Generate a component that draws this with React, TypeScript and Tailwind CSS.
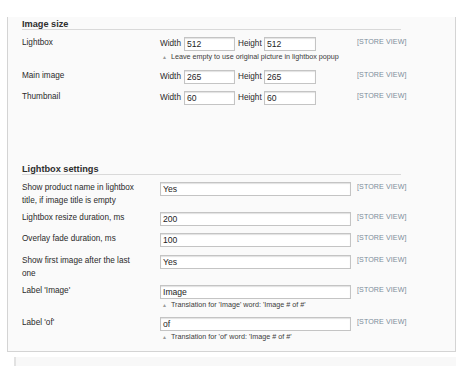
import React from "react";

const font = { fontFamily: '"Liberation Sans", Arial, sans-serif' };

function Input({ value, w }: { value: string; w: string }) {
  return (
    <div
      className={`${w} shrink-0 h-[14px] border border-[#c4c4c4] bg-white shadow-[inset_0_1px_1px_rgba(0,0,0,0.12)] pl-[2px] text-[8.6px] leading-[12px] text-[#1e1e1e]`}
    >
      {value}
    </div>
  );
}

function StoreView() {
  return (
    <div className="shrink-0 w-[90px] text-[7.1px] leading-[11px] text-[#7d8d9a] tracking-[0.1px]">
      [STORE VIEW]
    </div>
  );
}

function Note({ children }: { children: React.ReactNode }) {
  return (
    <div className="mt-[1px] flex items-center whitespace-nowrap text-[7.2px] leading-[10px] text-[#3a3a3a] pl-[2px]">
      <span className="text-[5px] text-[#9a9a9a] mr-[4px]">▲</span>
      <span>{children}</span>
    </div>
  );
}

function Row({
  label,
  children,
  mt,
}: {
  label: React.ReactNode;
  children: React.ReactNode;
  mt: string;
}) {
  return (
    <div className={`flex items-start ${mt}`}>
      <div className="shrink-0 w-[138px] -mt-px pr-[6px] text-[8.2px] leading-[13px] text-[#2a2a2a]">
        {label}
      </div>
      <div className="shrink-0 w-[197px]">{children}</div>
      <StoreView />
    </div>
  );
}

function SizeInputs({ w, h }: { w: string; h: string }) {
  return (
    <div className="flex items-center text-[8.2px] text-[#2a2a2a]">
      <span className="shrink-0 w-[24px]">Width</span>
      <Input value={w} w="w-[51px]" />
      <span className="shrink-0 ml-[3px] w-[26px]">Height</span>
      <Input value={h} w="w-[52px]" />
    </div>
  );
}

function Heading({ children, mt }: { children: React.ReactNode; mt: string }) {
  return (
    <div
      className={`${mt} w-[379px] h-[13px] border-b border-[#d9d9d9] text-[9.2px] font-bold leading-[14px] text-[#2e2e2e]`}
    >
      {children}
    </div>
  );
}

export default function App() {
  return (
    <div className="w-[460px] h-[366px] overflow-hidden bg-white" style={font}>
      <div className="ml-[7px] w-[449px] border-x border-b border-[#d4d4d4] bg-[#fafafa] pl-[14px] pb-[9px]">
        <Heading mt="mt-[17px]">Image size</Heading>

        <Row label="Lightbox" mt="mt-[7px]">
          <SizeInputs w="512" h="512" />
          <Note>Leave empty to use original picture in lightbox popup</Note>
        </Row>
        <Row label="Main image" mt="mt-[8px]">
          <SizeInputs w="265" h="265" />
        </Row>
        <Row label="Thumbnail" mt="mt-[7px]">
          <SizeInputs w="60" h="60" />
        </Row>

        <Heading mt="mt-[57px]">Lightbox settings</Heading>

        <Row
          label={
            <>
              Show product name in lightbox
              <br />
              title, if image title is empty
            </>
          }
          mt="mt-[7px]"
        >
          <Input value="Yes" w="w-[191px]" />
        </Row>
        <Row label="Lightbox resize duration, ms" mt="mt-[5px]">
          <Input value="200" w="w-[191px]" />
        </Row>
        <Row label="Overlay fade duration, ms" mt="mt-[7px]">
          <Input value="100" w="w-[191px]" />
        </Row>
        <Row
          label={
            <>
              Show first image after the last
              <br />
              one
            </>
          }
          mt="mt-[8px]"
        >
          <Input value="Yes" w="w-[191px]" />
        </Row>
        <Row label="Label 'Image'" mt="mt-[5px]">
          <Input value="Image" w="w-[191px]" />
          <Note>Translation for 'Image' word: 'Image # of #'</Note>
        </Row>
        <Row label="Label 'of'" mt="mt-[7px]">
          <Input value="of" w="w-[191px]" />
          <Note>Translation for 'of' word: 'Image # of #'</Note>
        </Row>
      </div>
      <div className="ml-[14px] mr-[4px] mt-[5px] h-[20px] border-l-2 border-[#e2e2e2] bg-[#f8f8f8]" />
    </div>
  );
}
